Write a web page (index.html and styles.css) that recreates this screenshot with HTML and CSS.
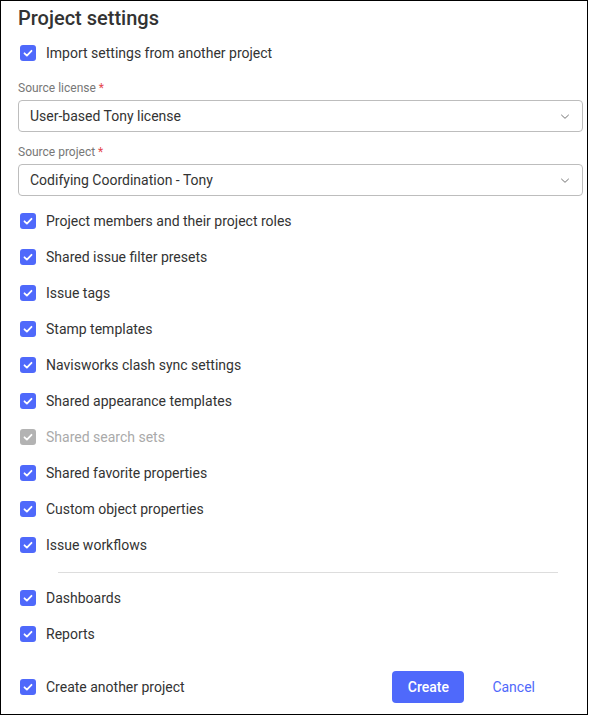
FILE: index.html
```html
<!DOCTYPE html>
<html lang="en">
<head>
    <meta charset="UTF-8">
    <meta name="viewport" content="width=device-width, initial-scale=1.0">
    <title>Project settings</title>
    <link rel="stylesheet" href="styles.css">
</head>
<body>

<div class="dialog">
    <h2 class="title">Project settings</h2>

    <label class="check-row import-row">
        <span class="box"><svg viewBox="0 0 16 16"><path d="M4.5 8.3l2.4 2.3 4.6-4.8"/></svg></span>
        Import settings from another project
    </label>

    <div class="field-label first">Source license <span class="req">*</span></div>
    <div class="select">
        <span>User-based Tony license</span>
        <svg class="chevron" viewBox="0 0 12 8"><path d="M1.5 2l4.5 4.2 4.5-4.2"/></svg>
    </div>

    <div class="field-label">Source project <span class="req">*</span></div>
    <div class="select">
        <span>Codifying Coordination - Tony</span>
        <svg class="chevron" viewBox="0 0 12 8"><path d="M1.5 2l4.5 4.2 4.5-4.2"/></svg>
    </div>

    <div class="options">
        <label class="check-row"><span class="box"><svg viewBox="0 0 16 16"><path d="M4.5 8.3l2.4 2.3 4.6-4.8"/></svg></span>Project members and their project roles</label>
        <label class="check-row"><span class="box"><svg viewBox="0 0 16 16"><path d="M4.5 8.3l2.4 2.3 4.6-4.8"/></svg></span>Shared issue filter presets</label>
        <label class="check-row"><span class="box"><svg viewBox="0 0 16 16"><path d="M4.5 8.3l2.4 2.3 4.6-4.8"/></svg></span>Issue tags</label>
        <label class="check-row"><span class="box"><svg viewBox="0 0 16 16"><path d="M4.5 8.3l2.4 2.3 4.6-4.8"/></svg></span>Stamp templates</label>
        <label class="check-row"><span class="box"><svg viewBox="0 0 16 16"><path d="M4.5 8.3l2.4 2.3 4.6-4.8"/></svg></span>Navisworks clash sync settings</label>
        <label class="check-row"><span class="box"><svg viewBox="0 0 16 16"><path d="M4.5 8.3l2.4 2.3 4.6-4.8"/></svg></span>Shared appearance templates</label>
        <label class="check-row disabled"><span class="box"><svg viewBox="0 0 16 16"><path d="M4.5 8.3l2.4 2.3 4.6-4.8"/></svg></span>Shared search sets</label>
        <label class="check-row"><span class="box"><svg viewBox="0 0 16 16"><path d="M4.5 8.3l2.4 2.3 4.6-4.8"/></svg></span>Shared favorite properties</label>
        <label class="check-row"><span class="box"><svg viewBox="0 0 16 16"><path d="M4.5 8.3l2.4 2.3 4.6-4.8"/></svg></span>Custom object properties</label>
        <label class="check-row"><span class="box"><svg viewBox="0 0 16 16"><path d="M4.5 8.3l2.4 2.3 4.6-4.8"/></svg></span>Issue workflows</label>
    </div>

    <hr class="divider">

    <div class="options">
        <label class="check-row"><span class="box"><svg viewBox="0 0 16 16"><path d="M4.5 8.3l2.4 2.3 4.6-4.8"/></svg></span>Dashboards</label>
        <label class="check-row"><span class="box"><svg viewBox="0 0 16 16"><path d="M4.5 8.3l2.4 2.3 4.6-4.8"/></svg></span>Reports</label>
    </div>

    <div class="footer">
        <label class="check-row"><span class="box"><svg viewBox="0 0 16 16"><path d="M4.5 8.3l2.4 2.3 4.6-4.8"/></svg></span>Create another project</label>
        <div class="actions">
            <button class="btn-primary">Create</button>
            <button class="btn-link">Cancel</button>
        </div>
    </div>
</div>

</body>
</html>
```

FILE: styles.css
```css
body {
    margin: 0;
    font-family: Roboto, "Liberation Sans", Arial, sans-serif;
    color: #333;
    background: #fff;
}
.dialog {
    box-sizing: border-box;
    width: 588px;
    height: 715px;
    border: 1px solid #000;
    padding: 5px 4px 0 17px;
}
.title {
    margin: 0;
    font-size: 20px;
    font-weight: 500;
    line-height: 24px;
    color: #333;
}
.check-row {
    display: flex;
    align-items: center;
    height: 36px;
    font-size: 14px;
    color: #333;
    padding-left: 2px;
}
.import-row {
    margin-top: 5px;
}
.box {
    width: 16px;
    height: 16px;
    border-radius: 3px;
    background-color: #4f69fb;
    margin-right: 10px;
    display: flex;
    flex-shrink: 0;
}
.box svg {
    width: 16px;
    height: 16px;
    fill: none;
    stroke: #fff;
    stroke-width: 1.8;
    stroke-linecap: round;
    stroke-linejoin: round;
}
.disabled {
    color: #aaa;
}
.disabled .box {
    background-color: #b3b3b3;
}
.field-label {
    font-size: 12px;
    line-height: 16px;
    color: #777;
    margin-top: 12px;
    margin-bottom: 4px;
}
.field-label.first {
    margin-top: 9px;
}
.req {
    color: #e5484d;
}
.select {
    box-sizing: border-box;
    height: 32px;
    border: 1px solid #bdbdbd;
    border-radius: 4px;
    display: flex;
    align-items: center;
    justify-content: space-between;
    padding: 0 12px 0 11px;
    font-size: 14px;
    color: #333;
}
.chevron {
    width: 10px;
    height: 7px;
    fill: none;
    stroke: #666;
    stroke-width: 1.1;
}
.options {
    margin-top: 7px;
}
.divider {
    border: none;
    border-top: 1px solid #ddd;
    margin: 9px 25px 0 40px;
}
.footer {
    display: flex;
    align-items: center;
    justify-content: space-between;
    margin-top: 17px;
    padding-right: 32px;
}
.actions {
    display: flex;
    gap: 12px;
}
button {
    font-family: inherit;
    font-size: 14px;
    font-weight: 500;
    height: 32px;
    border: none;
    border-radius: 4px;
    cursor: pointer;
}
.btn-primary {
    width: 72px;
    background-color: #4f69fb;
    color: #fff;
}
.btn-link {
    background: none;
    color: #4f69fb;
    padding: 0 16px;
    font-weight: 400;
}
```
